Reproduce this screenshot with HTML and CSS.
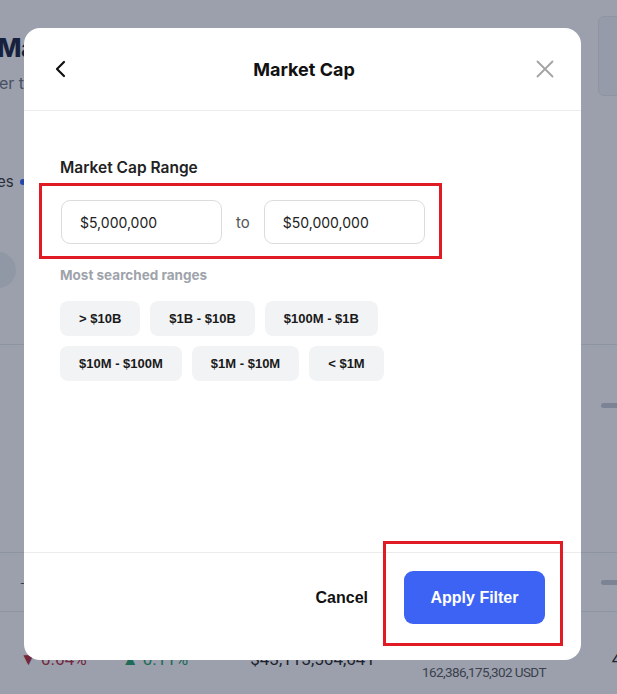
FILE: index.html
```html
<!DOCTYPE html>
<html>
<head>
	<meta charset="utf-8">
	<title>Market Cap</title>
	<link rel="stylesheet" href="styles.css">
</head>
<body>
	<!-- page behind the modal -->
	<div class="page">
		<div class="top">
			<div class="intro">
				<h1 class="title">Markets</h1>
				<p class="sub">er the top cryptocurrencies</p>
			</div>
			<div class="side-card"></div>
		</div>
		<div class="tabs">
			<span>es</span><i class="dot"></i>
		</div>
		<div class="blob-row">
			<div class="blob"></div>
		</div>
		<div class="row row-a">
			<div class="pill"></div>
		</div>
		<div class="row row-b">
			<span class="tick">-</span>
			<div class="pill"></div>
		</div>
		<div class="row row-c">
			<span class="down">&#9660; 0.64%</span>
			<span class="up">&#9650; 0.11%</span>
			<span class="cap">$43,113,564,641</span>
			<span class="vol">162,386,175,302 USDT</span>
			<span class="last">4</span>
		</div>
	</div>

	<!-- 遮罩层 + 弹窗 -->
	<div class="overlay">
		<div class="modal">
			<div class="modal-head">
				<svg class="back" width="14" height="20" viewBox="0 0 14 20"><path d="M10 3 L3 10 L10 17" fill="none" stroke="#111" stroke-width="2.2" stroke-linecap="round" stroke-linejoin="round"/></svg>
				<h2>Market Cap</h2>
				<svg class="close" width="18" height="18" viewBox="0 0 18 18"><path d="M1.5 1.5 L16.5 16.5 M16.5 1.5 L1.5 16.5" fill="none" stroke="#a3a3a3" stroke-width="1.8" stroke-linecap="round"/></svg>
			</div>
			<div class="modal-body">
				<label class="field-label">Market Cap Range</label>
				<div class="range">
					<span class="mark mark-range"></span>
					<input type="text" value="$5,000,000">
					<span class="to">to</span>
					<input type="text" value="$50,000,000">
				</div>
				<div class="hint">Most searched ranges</div>
				<div class="chips">
					<span class="chip">&gt; $10B</span>
					<span class="chip">$1B - $10B</span>
					<span class="chip">$100M - $1B</span>
				</div>
				<div class="chips">
					<span class="chip">$10M - $100M</span>
					<span class="chip">$1M - $10M</span>
					<span class="chip">&lt; $1M</span>
				</div>
			</div>
			<div class="modal-foot">
				<span class="cancel">Cancel</span>
				<div class="apply-wrap">
					<span class="mark mark-apply"></span>
					<button class="apply">Apply Filter</button>
				</div>
			</div>
		</div>
	</div>
</body>
</html>
```
FILE: styles.css
```css
html,body{
	margin: 0;
	height: 100%;
}
body{
	width: 617px;
	height: 694px;
	overflow: hidden;
	position: relative;
	font-family: Inter, "Liberation Sans", sans-serif;
}
/* 背景页面 */
.page{
	height: 694px;
	background: #fff;
	overflow: hidden;
}
.top{
	height: 110px;
	display: flex;
	justify-content: space-between;
}
.intro{
	padding-top: 31px;
	white-space: nowrap;
}
.title{
	margin: 0 0 0 -3px;
	font-size: 26px;
	line-height: 34px;
	font-weight: 800;
	letter-spacing: -0.5px;
	color: #141b3a;
}
.sub{
	margin: 7px 0 0 -1px;
	font-size: 16px;
	line-height: 22px;
	color: #6b7280;
}
.side-card{
	width: 30px;
	height: 78px;
	margin: 16px -13px 0 0;
	border: 1px solid #e8eaef;
	border-radius: 6px;
	background: #f6f7f9;
}
.tabs{
	height: 120px;
	padding-top: 62px;
	box-sizing: border-box;
	font-size: 15px;
	color: #333;
	display: flex;
	align-items: flex-start;
	gap: 6px;
	margin-left: -3px;
}
.dot{
	width: 6px;
	height: 6px;
	border-radius: 50%;
	background: #2e5bff;
	margin-top: 7px;
}
.blob-row{
	height: 115px;
	padding-top: 22px;
	border-bottom: 1px solid #e7e9ee;
	box-sizing: border-box;
}
.blob{
	width: 44px;
	height: 36px;
	margin-left: -28px;
	border-radius: 18px;
	background: #eef0f3;
}
.row{
	border-bottom: 1px solid #e7e9ee;
	box-sizing: border-box;
	display: flex;
	justify-content: flex-end;
}
.row-a{
	height: 208px;
	padding-top: 58px;
}
.row-b{
	height: 59px;
	justify-content: space-between;
	align-items: center;
}
.tick{
	margin-left: 20px;
	color: #555;
	font-size: 12px;
}
.pill{
	width: 30px;
	height: 5px;
	border-radius: 3px;
	background: #c7ccd6;
	margin-right: -14px;
}
.row-c{
	border: none;
	height: 82px;
	justify-content: flex-start;
	align-items: flex-start;
	font-family: Roboto, "Liberation Sans", sans-serif;
	font-size: 17px;
	color: #222;
	white-space: nowrap;
}
.row-c span{
	flex: none;
	margin-top: 37px;
	line-height: 20px;
}
.down{
	margin-left: 20px;
	color: #b8283a;
}
.up{
	margin-left: 35px;
	color: #23a06a;
}
.row-c .cap{
	margin-left: 62px;
}
.row-c .vol{
	margin: 50px 0 0 47px;
	font-size: 13.5px;
	letter-spacing: -0.6px;
	color: #555;
}
.row-c .last{
	margin-left: 66px;
}

/* 遮罩层 */
.overlay{
	position: absolute;
	inset: 0;
	background: rgba(28,38,66,0.44);
	padding: 28px 36px 34px 24px;
	box-sizing: border-box;
}
.modal{
	height: 100%;
	background: #fff;
	border-radius: 16px;
	display: flex;
	flex-direction: column;
}
.modal-head{
	height: 82px;
	flex: none;
	border-bottom: 1px solid #ececec;
	display: flex;
	align-items: center;
	justify-content: space-between;
	padding: 0 27px 0 30px;
}
.modal-head h2{
	margin: 0 0 0 4px;
	font-size: 18px;
	font-weight: 700;
	color: #111;
}
.back{
	display: block;
}
.close{
	display: block;
}
.modal-body{
	flex: 1;
	padding: 47px 36px 0;
}
.field-label{
	display: block;
	font-size: 15.5px;
	font-weight: 600;
	line-height: 20px;
	color: #222;
}
.range{
	position: relative;
	margin-top: 22px;
	display: flex;
	align-items: center;
	gap: 14px;
	width: 365px;
}
.range input{
	width: 161px;
	height: 44px;
	box-sizing: border-box;
	border: 1px solid #dcdcdc;
	border-radius: 9px;
	padding: 0 0 0 18px;
	font-family: Inter, "Liberation Sans", sans-serif;
	font-size: 14px;
	color: #222;
	outline: none;
}
.range input:first-of-type{
	margin-left: 1px;
}
.to{
	font-size: 15px;
	color: #555;
	margin-top: 1px;
}
/* 红色标注框 */
.mark{
	position: absolute;
	border: 3px solid #e01b24;
	pointer-events: none;
}
.mark-range{
	left: -21px;
	top: -17px;
	right: -17px;
	bottom: -15px;
}
.hint{
	margin-top: 23px;
	font-size: 13.5px;
	font-weight: 700;
	line-height: 16px;
	color: #9ea3ab;
}
.chips{
	display: flex;
	gap: 10px;
	margin-top: 10px;
}
.hint + .chips{
	margin-top: 18px;
}
.chip{
	height: 35px;
	padding: 0 19px;
	border-radius: 8px;
	background: #f1f3f5;
	font-family: "Liberation Sans", Arial, sans-serif;
	font-size: 13px;
	font-weight: 700;
	color: #1a1a1a;
	display: flex;
	align-items: center;
}
.modal-foot{
	height: 108px;
	flex: none;
	border-top: 1px solid #ececec;
	box-sizing: border-box;
	padding: 18px 36px 0 0;
	display: flex;
	justify-content: flex-end;
	align-items: flex-start;
	gap: 36px;
}
.cancel{
	font-family: "Liberation Sans", Arial, sans-serif;
	font-size: 16px;
	font-weight: 700;
	color: #111;
	line-height: 53px;
}
.apply-wrap{
	position: relative;
}
.apply{
	display: block;
	width: 141px;
	height: 53px;
	border: none;
	border-radius: 9px;
	background: #3d63f4;
	color: #fff;
	font-family: "Liberation Sans", Arial, sans-serif;
	font-size: 16px;
	font-weight: 700;
}
.mark-apply{
	left: -21px;
	top: -30px;
	right: -18px;
	bottom: -22px;
}
```
